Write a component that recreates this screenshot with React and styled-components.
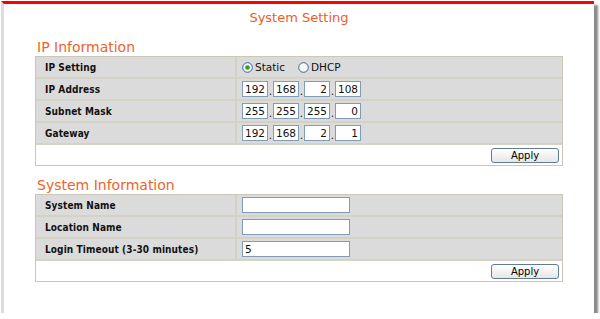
import styled, { createGlobalStyle } from "styled-components";

const GlobalStyle = createGlobalStyle`
  html, body {
    margin: 0;
    padding: 0;
    background: #ffffff;
  }
`;

const Panel = styled.div`
  box-sizing: border-box;
  width: 593px;
  height: 312px;
  margin: 1px 0 0 1px;
  background: #ffffff;
  border-top: 3px solid #ff0000;
  border-left: 3px solid #dcdcdc;
  box-shadow: 4px 4px 2px #8a8a8a;
  padding: 6px 31px 0 31px;
  font-family: "DejaVu Sans", Verdana, sans-serif;
`;

const Title = styled.div`
  text-align: center;
  font-size: 13px;
  line-height: 16px;
  color: #f35a24;
`;

const Heading = styled.div`
  margin-top: ${({ $top }) => $top};
  padding-left: 2px;
  font-size: 14px;
  line-height: 17px;
  color: #f0622a;
`;

const Table = styled.div`
  display: grid;
  grid-template-columns: 199px 1fr;
  gap: 2px;
  border: 1px solid #cbc7b8;
  background: #d4d1c5;
`;

const LabelCell = styled.div`
  height: 20px;
  display: flex;
  align-items: center;
  padding-left: 9px;
  background: #dbdbdb;
  font-family: "DejaVu Sans Condensed", "Liberation Sans", sans-serif;
  font-weight: bold;
  font-size: 10px;
  letter-spacing: 0.1px;
  color: #111111;
`;

const ValueCell = styled.div`
  height: 20px;
  display: flex;
  align-items: center;
  padding-left: 5px;
  background: #dbdbdb;
  font-size: 10.5px;
  color: #111111;
`;

const Footer = styled.div`
  grid-column: 1 / -1;
  height: 20px;
  display: flex;
  align-items: center;
  justify-content: flex-end;
  padding-right: 3px;
  background: #ffffff;
`;

const ApplyButton = styled.button`
  box-sizing: border-box;
  width: 68px;
  height: 15px;
  padding: 0;
  border: 1px solid #5f7b98;
  border-radius: 3px;
  background: linear-gradient(#ffffff, #e6e6e6);
  font-family: "DejaVu Sans", Verdana, sans-serif;
  font-size: 10px;
  line-height: 13px;
  color: #000000;
`;

const RadioGroup = styled.label`
  display: flex;
  align-items: center;
  gap: 2px;
  margin-right: ${({ $gap }) => $gap || "0"};
`;

const IpRow = styled.div`
  display: flex;
  align-items: flex-end;
`;

const Octet = styled.input`
  box-sizing: border-box;
  width: 26px;
  height: 16px;
  margin: 0;
  padding: 0 2px 0 0;
  border: 1px solid #7f9db9;
  background: #ffffff;
  text-align: right;
  font-family: "DejaVu Sans", Verdana, sans-serif;
  font-size: 10.5px;
  color: #111111;
`;

const Dot = styled.span`
  width: 5px;
  text-align: center;
  font-size: 10.5px;
  line-height: 12px;
`;

const TextField = styled.input`
  box-sizing: border-box;
  width: 108px;
  height: 16px;
  margin: 0;
  padding: 0 2px;
  border: 1px solid #7f9db9;
  background: #ffffff;
  font-family: "DejaVu Sans", Verdana, sans-serif;
  font-size: 10.5px;
  color: #111111;
`;

const Radio = ({ checked }) => (
  <svg width="11" height="11" viewBox="0 0 11 11">
    <circle cx="5.5" cy="5.5" r="4.8" fill="#f7f7f7" stroke="#3c6590" strokeWidth="1" />
    {checked && <circle cx="5.5" cy="5.5" r="2.3" fill="#2f9e3a" />}
  </svg>
);

const IpInput = ({ parts }) => (
  <IpRow>
    {parts.map((p, i) => (
      <IpRow key={i}>
        <Octet readOnly value={p} />
        {i < parts.length - 1 && <Dot>.</Dot>}
      </IpRow>
    ))}
  </IpRow>
);

export default function App() {
  return (
    <>
      <GlobalStyle />
      <Panel>
        <Title>System Setting</Title>

        <Heading $top="13px">IP Information</Heading>
        <Table>
          <LabelCell>IP Setting</LabelCell>
          <ValueCell>
            <RadioGroup $gap="13px">
              <Radio checked />
              Static
            </RadioGroup>
            <RadioGroup>
              <Radio />
              DHCP
            </RadioGroup>
          </ValueCell>
          <LabelCell>IP Address</LabelCell>
          <ValueCell>
            <IpInput parts={["192", "168", "2", "108"]} />
          </ValueCell>
          <LabelCell>Subnet Mask</LabelCell>
          <ValueCell>
            <IpInput parts={["255", "255", "255", "0"]} />
          </ValueCell>
          <LabelCell>Gateway</LabelCell>
          <ValueCell>
            <IpInput parts={["192", "168", "2", "1"]} />
          </ValueCell>
          <Footer>
            <ApplyButton>Apply</ApplyButton>
          </Footer>
        </Table>

        <Heading $top="11px">System Information</Heading>
        <Table>
          <LabelCell>System Name</LabelCell>
          <ValueCell>
            <TextField readOnly value="" />
          </ValueCell>
          <LabelCell>Location Name</LabelCell>
          <ValueCell>
            <TextField readOnly value="" />
          </ValueCell>
          <LabelCell>Login Timeout (3-30 minutes)</LabelCell>
          <ValueCell>
            <TextField readOnly value="5" />
          </ValueCell>
          <Footer>
            <ApplyButton>Apply</ApplyButton>
          </Footer>
        </Table>
      </Panel>
    </>
  );
}
